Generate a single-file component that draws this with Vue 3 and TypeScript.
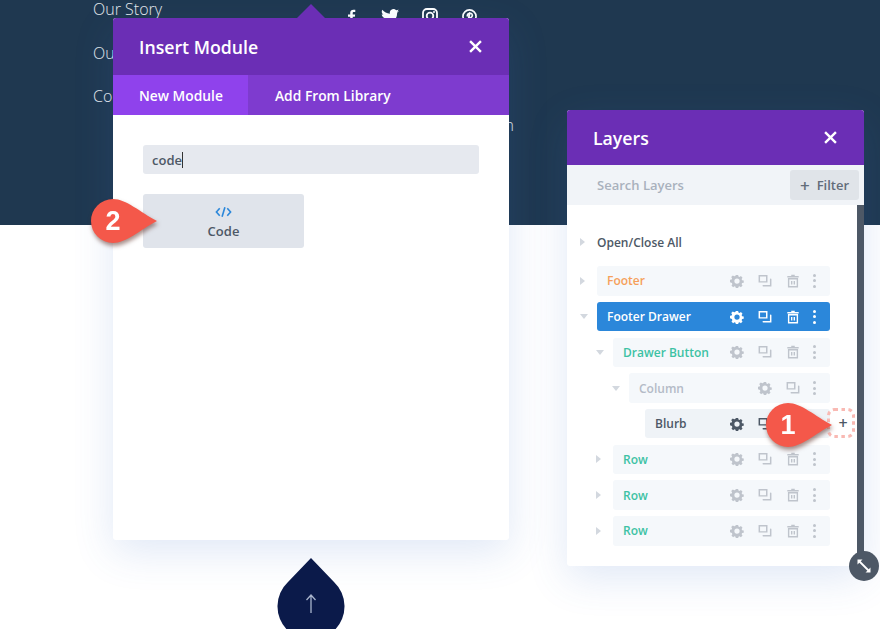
<script setup lang="ts">
interface Layer {
  name: string
  depth: number
  tone: string
  open?: boolean
  noArrow?: boolean
  noTrash?: boolean
}

const layers: Layer[] = [
  { name: 'Footer', depth: 0, tone: 'orange' },
  { name: 'Footer Drawer', depth: 0, tone: 'active', open: true },
  { name: 'Drawer Button', depth: 1, tone: 'green', open: true },
  { name: 'Column', depth: 2, tone: 'gray', open: true, noTrash: true },
  { name: 'Blurb', depth: 3, tone: 'dark', noArrow: true },
  { name: 'Row', depth: 1, tone: 'green' },
  { name: 'Row', depth: 1, tone: 'green' },
  { name: 'Row', depth: 1, tone: 'green' }
]
</script>

<template>
  <div class="stage">
    <svg class="defs" width="0" height="0">
      <symbol id="gear" viewBox="0 0 16 16">
        <path fill="currentColor" fill-rule="evenodd" d="M6.700 1h2.600l.4 1.900 1.200.5 1.600-1 1.800 1.800-1 1.600.5 1.200 1.900.4v2.600l-1.900.4-.5 1.200 1 1.600-1.800 1.800-1.600-1-1.200.5-.4 1.900H6.700l-.4-1.900-1.200-.5-1.600 1-1.800-1.800 1-1.600-.5-1.200L0 9.300V6.700l1.900-.4.5-1.200-1-1.600 1.800-1.800 1.600 1 1.200-.5zM8 5a3 3 0 1 0 0 6 3 3 0 0 0 0-6z" />
      </symbol>
      <symbol id="copy" viewBox="0 0 16 16">
        <path fill="none" stroke="currentColor" stroke-width="1.700" d="M1.500 2h8.500v7H1.500z" />
        <path fill="none" stroke="currentColor" stroke-width="1.700" stroke-linecap="round" d="M14.500 6v7.500H6" />
      </symbol>
      <symbol id="trash" viewBox="0 0 16 16">
        <path fill="currentColor" d="M6 .8h4v1.400h4.500v1.700h-13V2.200H6z" />
        <path fill="none" stroke="currentColor" stroke-width="1.600" d="M3 5.500h10v9H3zM6.500 8v4M9.500 8v4" />
      </symbol>
    </svg>

    <footer class="site-footer">
      <nav class="footer-links">
        <a>Our Story</a>
        <a>Our Team</a>
        <a>Contact</a>
      </nav>
      <div class="footer-side">
        <div class="social">
          <svg viewBox="0 0 14 16" width="12" height="16">
            <path fill="currentColor" d="M9 16V9h2.500l.4-2.800H9V4.500c0-.8.3-1.300 1.400-1.300H12V.7C11.700.7 10.800.6 9.800.6 7.600.6 6.100 1.900 6.100 4.300v1.900H3.500V9h2.600v7z" />
          </svg>
          <svg viewBox="0 0 24 20" width="18" height="15">
            <path fill="currentColor" d="M24 2.400c-.9.400-1.800.7-2.800.8 1-.6 1.800-1.600 2.200-2.700-1 .6-2 1-3.100 1.200A4.900 4.900 0 0 0 11.900 6.200C7.800 6 4.200 4 1.700.9c-1.300 2.200-.7 5.100 1.500 6.600-.8 0-1.600-.2-2.200-.6 0 2.300 1.600 4.400 3.900 4.900-.7.200-1.500.2-2.200.1.600 2 2.400 3.400 4.600 3.400A9.900 9.900 0 0 1 0 17.300 14 14 0 0 0 21.500 4.900c1-.7 1.900-1.500 2.500-2.500z" />
          </svg>
          <svg viewBox="0 0 16 16" width="16" height="16">
            <rect x="1" y="1" width="14" height="14" rx="4" fill="none" stroke="currentColor" stroke-width="1.800" />
            <circle cx="8" cy="8" r="3.300" fill="none" stroke="currentColor" stroke-width="1.800" />
            <circle cx="12" cy="4" r="1" fill="currentColor" />
          </svg>
          <svg viewBox="0 0 16 16" width="15" height="15">
            <circle cx="8" cy="8" r="7" fill="none" stroke="currentColor" stroke-width="1.800" />
            <path fill="none" stroke="currentColor" stroke-width="1.800" d="M8.500 3.500l-2 9M6 8c-1-2 .5-3.500 2.500-3.500s3 1.500 2.300 3.300-3 2-3.500 1" />
          </svg>
        </div>
        <span class="footer-side-link">Sign In</span>
      </div>
    </footer>

    <section class="panel insert">
      <span class="notch"></span>
      <header class="panel-head">
        <h2>Insert Module</h2>
        <svg class="close" viewBox="0 0 12 12" width="13" height="13">
          <path d="M1 1l10 10M11 1L1 11" stroke="currentColor" stroke-width="2.200" />
        </svg>
      </header>
      <div class="tabs">
        <span class="tab current">New Module</span>
        <span class="tab">Add From Library</span>
      </div>
      <div class="insert-body">
        <div class="search-field">code<i class="caret"></i></div>
        <button class="module-btn">
          <svg viewBox="0 0 18 12" width="17" height="12">
            <path d="M5 2L1.500 6 5 10M13 2l3.500 4L13 10M10.500 1l-3 10" fill="none" stroke="currentColor" stroke-width="1.700" />
          </svg>
          <span>Code</span>
        </button>
      </div>
    </section>

    <section class="panel layers">
      <header class="panel-head">
        <h2>Layers</h2>
        <svg class="close" viewBox="0 0 12 12" width="13" height="13">
          <path d="M1 1l10 10M11 1L1 11" stroke="currentColor" stroke-width="2.200" />
        </svg>
      </header>
      <div class="layer-search">
        <span>Search Layers</span>
        <button class="filter"><b>+</b><span>Filter</span></button>
      </div>
      <div class="layer-body">
        <div class="tree">
          <div class="toggle-all"><i class="arrow"></i>Open/Close All</div>
          <div
            v-for="(layer, i) in layers"
            :key="i"
            class="layer"
            :class="[`depth-${layer.depth}`, layer.tone]"
          >
            <i class="arrow" :class="{ open: layer.open, hidden: layer.noArrow }"></i>
            <div class="layer-row">
              <span class="layer-name">{{ layer.name }}</span>
              <svg class="ico" width="14" height="14"><use href="#gear" /></svg>
              <svg class="ico" width="14" height="14"><use href="#copy" /></svg>
              <svg v-if="!layer.noTrash" class="ico" width="14" height="14"><use href="#trash" /></svg>
              <span class="dots"><i></i><i></i><i></i></span>
            </div>
          </div>
        </div>
        <div class="scrollbar"></div>
      </div>
      <div class="resize">
        <svg viewBox="0 0 16 16" width="16" height="16">
          <path d="M3 3l10 10" stroke="#fff" stroke-width="1.800" />
          <path d="M1.500 6.500v-5h5zM14.500 9.500v5h-5z" fill="#fff" />
        </svg>
      </div>
    </section>

    <div class="add-slot">
      <svg viewBox="0 0 28 30" width="28" height="30">
        <rect x="1.500" y="1.500" width="25" height="27" rx="6" fill="none" stroke="#f9b9b3" stroke-width="3" stroke-dasharray="3.500 3.500" />
      </svg>
      <span>+</span>
    </div>

    <div class="bubble two">
      <svg viewBox="0 0 68 46" width="68" height="46">
        <path d="M23 1c13 0 27 13 44 22C50 32 36 45 23 45A22 22 0 0 1 23 1z" fill="#f4584a" />
      </svg>
      <span>2</span>
    </div>
    <div class="bubble one">
      <svg viewBox="0 0 68 46" width="68" height="46">
        <path d="M23 1c13 0 27 13 44 22C50 32 36 45 23 45A22 22 0 0 1 23 1z" fill="#f4584a" />
      </svg>
      <span>1</span>
    </div>

    <div class="drop">
      <svg viewBox="0 0 68 72" width="68" height="72">
        <path d="M34 0L11 24A33.500 33.500 0 1 0 57 24z" fill="#0b1a4a" />
        <path d="M34 55V37M29.500 42L34 37l4.500 5" fill="none" stroke="#a9b4cc" stroke-width="1.300" />
      </svg>
    </div>
  </div>
</template>

<style scoped>
.stage {
  position: relative;
  width: 880px;
  height: 629px;
  overflow: hidden;
  background: #fff;
  font-family: 'Open Sans', sans-serif;
}

.defs {
  position: absolute;
}

.site-footer {
  display: flex;
  height: 225px;
  background: #1f3850;
  color: #e6eaee;
  font-weight: 300;
  font-size: 16px;
}

.footer-links {
  display: flex;
  flex-direction: column;
  gap: 21.500px;
  margin: -2px 0 0 93px;
}

.footer-links a {
  line-height: 22px;
}

.footer-side {
  display: flex;
  flex-direction: column;
  align-items: flex-end;
  width: 169px;
  margin-left: 180px;
}

.social {
  display: flex;
  align-items: center;
  justify-content: space-between;
  width: 132px;
  margin: 8px 37px 0 0;
  color: #fff;
}

.footer-side-link {
  margin-top: 90px;
}

.panel {
  position: absolute;
  background: #fff;
  border-radius: 3px;
  box-shadow: 0 12px 40px rgba(64, 110, 200, 0.16);
}

.panel-head {
  display: flex;
  align-items: center;
  justify-content: space-between;
  background: #6b2eb5;
  color: #fff;
  border-radius: 3px 3px 0 0;
}

.panel-head h2 {
  margin: 0;
  font-size: 17.700px;
  font-weight: 600;
}

.close {
  color: #fff;
}

.insert {
  left: 113px;
  top: 18px;
  width: 396px;
  height: 522px;
}

.notch {
  position: absolute;
  left: 184px;
  top: -14px;
  border: 14px solid transparent;
  border-top: 0;
  border-bottom-color: #6b2eb5;
}

.insert .panel-head {
  height: 57px;
  padding: 0 27px 0 26px;
}

.tabs {
  display: flex;
  height: 40px;
  background: #7e3bcf;
  color: #fff;
  font-size: 13.800px;
  font-weight: 600;
  white-space: nowrap;
}

.tab {
  display: flex;
  align-items: center;
  padding: 0 27px;
}

.tab.current {
  width: 135px;
  box-sizing: border-box;
  padding: 0 26px;
  background: #8f42ec;
}

.insert-body {
  display: flex;
  flex-direction: column;
  gap: 20px;
  padding: 30px;
}

.search-field {
  display: flex;
  align-items: center;
  height: 29px;
  padding-left: 9px;
  background: #e6e9ef;
  border-radius: 3px;
  color: #4d5866;
  font-size: 13px;
  font-weight: 600;
}

.caret {
  width: 1px;
  height: 16px;
  background: #333;
}

.module-btn {
  display: flex;
  flex-direction: column;
  align-items: center;
  gap: 4px;
  width: 161px;
  height: 54px;
  padding: 12px 0 0;
  border: 0;
  border-radius: 3px;
  background: #e0e4eb;
  color: #2b87da;
  font-family: inherit;
}

.module-btn span {
  color: #4d5866;
  font-size: 13px;
  font-weight: 600;
  line-height: 18px;
}

.layers {
  left: 567px;
  top: 110px;
  width: 297px;
  height: 456px;
  display: flex;
  flex-direction: column;
}

.layers .panel-head {
  flex: none;
  height: 55px;
  padding: 0 27px 0 26px;
}

.layer-search {
  flex: none;
  display: flex;
  align-items: center;
  justify-content: space-between;
  height: 40px;
  padding: 0 5px 0 30px;
  background: #f1f4f8;
  color: #a9b1bd;
  font-size: 13px;
  font-weight: 600;
}

.filter {
  display: flex;
  align-items: center;
  justify-content: center;
  gap: 7px;
  width: 69px;
  height: 30px;
  padding: 0;
  border: 0;
  border-radius: 3px;
  background: #e0e4e9;
  color: #626c7a;
  font-family: inherit;
  font-size: 13px;
  font-weight: 600;
}

.filter b {
  font-size: 17px;
  font-weight: 600;
  line-height: 1;
}

.layer-body {
  flex: 1;
  display: flex;
  justify-content: space-between;
  min-height: 0;
}

.tree {
  display: flex;
  flex-direction: column;
  gap: 6.200px;
  box-sizing: border-box;
  width: 263px;
  padding: 24px 0 0 13px;
}

.toggle-all {
  display: flex;
  align-items: center;
  height: 26px;
  margin-bottom: 5px;
  color: #4d5866;
  font-size: 12px;
  font-weight: 600;
}

.layer {
  display: flex;
  align-items: center;
  height: 29.500px;
}

.depth-1 {
  padding-left: 16px;
}

.depth-2 {
  padding-left: 32px;
}

.depth-3 {
  padding-left: 48px;
}

.arrow {
  flex: none;
  width: 0;
  height: 0;
  margin-right: 12px;
  border-style: solid;
  border-width: 4px 0 4px 5px;
  border-color: transparent transparent transparent #d3d8df;
}

.arrow.open {
  margin-right: 9px;
  border-width: 5px 4px 0;
  border-color: #d3d8df transparent transparent;
}

.arrow.hidden {
  visibility: hidden;
}

.layer-row {
  flex: 1;
  display: flex;
  align-items: center;
  height: 100%;
  padding: 0 14.500px 0 10px;
  background: #f5f8fb;
  border-radius: 3px;
  color: #bfc4cc;
  font-size: 12px;
  font-weight: 600;
}

.layer-name {
  flex: 1;
}

.ico {
  flex: none;
  margin-right: 14px;
}

.ico + .dots {
  margin-left: -1.500px;
}

.dots {
  display: flex;
  flex-direction: column;
  gap: 2.500px;
  width: 3px;
}

.dots i {
  width: 3px;
  height: 3px;
  border-radius: 50%;
  background: currentColor;
}

.orange .layer-name {
  color: #f5a05a;
}

.green .layer-name {
  color: #3dc2a4;
}

.gray .layer-name {
  color: #b4bbc7;
}

.dark .layer-name {
  color: #4d5866;
}

.dark .layer-row {
  background: #eff3f7;
  color: #4d5866;
}

.active .layer-row {
  background: #2b87da;
  color: #fff;
}

.active .layer-name {
  color: #fff;
}

.scrollbar {
  width: 7px;
  background: #4d5866;
}

.resize {
  position: absolute;
  right: -15px;
  bottom: -15px;
  display: flex;
  align-items: center;
  justify-content: center;
  width: 30px;
  height: 30px;
  border-radius: 50%;
  background: #4d5866;
}

.add-slot {
  position: absolute;
  left: 827px;
  top: 408px;
  display: flex;
  align-items: center;
  justify-content: center;
  width: 28px;
  height: 30px;
  padding-left: 4px;
  box-sizing: border-box;
  color: #4d5866;
  font-size: 16px;
  font-weight: 600;
}

.add-slot svg {
  position: absolute;
  left: 0;
  top: 0;
}

.add-slot span {
  position: relative;
}

.bubble {
  position: absolute;
  display: flex;
  align-items: center;
  width: 68px;
  height: 46px;
  filter: drop-shadow(1px 3px 2px rgba(80, 30, 20, 0.5));
}

.bubble svg {
  position: absolute;
  left: 0;
  top: 0;
}

.bubble span {
  position: relative;
  width: 46px;
  color: #fff;
  text-align: center;
  font-family: 'Liberation Sans', sans-serif;
  font-size: 27px;
  font-weight: 700;
}

.two {
  left: 90px;
  top: 198px;
}

.one {
  left: 765px;
  top: 402px;
}

.drop {
  position: absolute;
  left: 277px;
  top: 558px;
  display: flex;
}
</style>
